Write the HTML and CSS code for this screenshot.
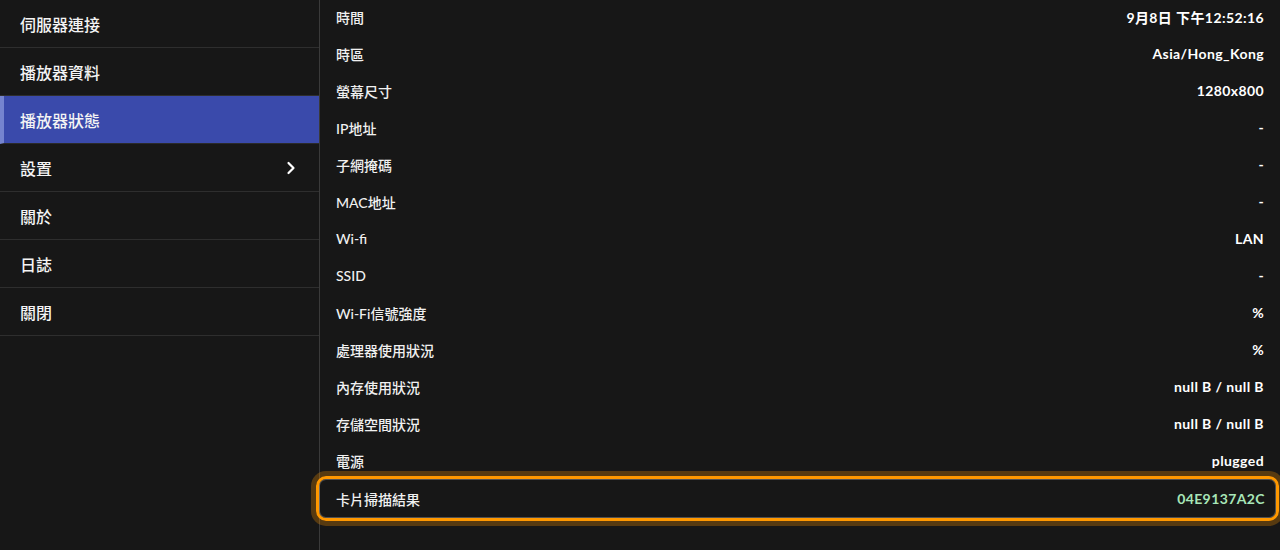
FILE: index.html
```html
<!DOCTYPE html>
<html lang="zh-Hant">
<head>
<meta charset="utf-8">
<title>播放器狀態</title>
<link rel="stylesheet" href="styles.css">
</head>
<body>
<div class="app">
  <nav class="sidebar">
    <div class="nav-item">伺服器連接</div>
    <div class="nav-item">播放器資料</div>
    <div class="nav-item active">播放器狀態</div>
    <div class="nav-item has-sub">設置
      <svg class="chev" width="10" height="14" viewBox="0 0 10 14"><path d="M2.5 2 L7.5 7 L2.5 12" fill="none" stroke="#ffffff" stroke-width="2.2" stroke-linecap="round" stroke-linejoin="round"/></svg>
    </div>
    <div class="nav-item">關於</div>
    <div class="nav-item">日誌</div>
    <div class="nav-item">關閉</div>
  </nav>
  <main class="content">
    <div class="rows">
      <div class="row"><span class="label">時間</span><span class="value">9月8日 下午12:52:16</span></div>
      <div class="row"><span class="label">時區</span><span class="value">Asia/Hong_Kong</span></div>
      <div class="row"><span class="label">螢幕尺寸</span><span class="value">1280x800</span></div>
      <div class="row"><span class="label">IP地址</span><span class="value">-</span></div>
      <div class="row"><span class="label">子網掩碼</span><span class="value">-</span></div>
      <div class="row"><span class="label">MAC地址</span><span class="value">-</span></div>
      <div class="row"><span class="label">Wi-fi</span><span class="value">LAN</span></div>
      <div class="row"><span class="label">SSID</span><span class="value">-</span></div>
      <div class="row"><span class="label">Wi-Fi信號強度</span><span class="value">%</span></div>
      <div class="row"><span class="label">處理器使用狀況</span><span class="value">%</span></div>
      <div class="row"><span class="label">內存使用狀況</span><span class="value">null B / null B</span></div>
      <div class="row"><span class="label">存儲空間狀況</span><span class="value">null B / null B</span></div>
      <div class="row"><span class="label">電源</span><span class="value">plugged</span></div>
      <div class="row card"><span class="label">卡片掃描結果</span><span class="value green">04E9137A2C</span></div>
    </div>
  </main>
</div>
</body>
</html>
```
FILE: styles.css
```css
* { box-sizing: border-box; }
html, body {
  margin: 0;
  padding: 0;
  background: #171717;
  height: 100%;
  overflow: hidden;
}
body {
  font-family: "Lato", "Noto Sans CJK TC", sans-serif;
  color: #f2f2f2;
}
.app {
  display: flex;
  height: 550px;
}
.sidebar {
  width: 320px;
  flex: 0 0 320px;
  border-right: 1px solid #3a3a3a;
  background: #171717;
}
.nav-item {
  height: 48px;
  display: flex;
  align-items: center;
  justify-content: space-between;
  padding: 0 23px 0 20px;
  font-size: 16px;
  font-weight: 500;
  border-bottom: 1px solid #2e2e2e;
  color: #f4f4f4;
}
.nav-item.active {
  background: #3a4aab;
  border-left: 4px solid #7584cf;
  padding-left: 16px;
  border-bottom-color: #2a2a2a;
}
.chev { display: block; }
.content {
  flex: 1;
  padding: 0 16px;
}
.rows {
  margin-top: -2px;
}
.row {
  height: 37px;
  display: flex;
  align-items: center;
  justify-content: space-between;
  font-size: 14px;
}
.label {
  font-weight: 500;
  color: #f0f0f0;
}
.value {
  font-weight: 700;
  color: #ffffff;
  letter-spacing: 0.4px;
}
.value.green { color: #a8e6b8; }
.row.card {
  margin: -3px -15px 0 -20px;
  height: 45px;
  padding: 0 11px 0 17px;
  border: 3px solid #ff9800;
  border-radius: 10px;
  box-shadow: inset 0 0 0 1px rgba(255,255,255,0.25), 0 0 0 5px rgba(255,152,0,0.28);
}
```
